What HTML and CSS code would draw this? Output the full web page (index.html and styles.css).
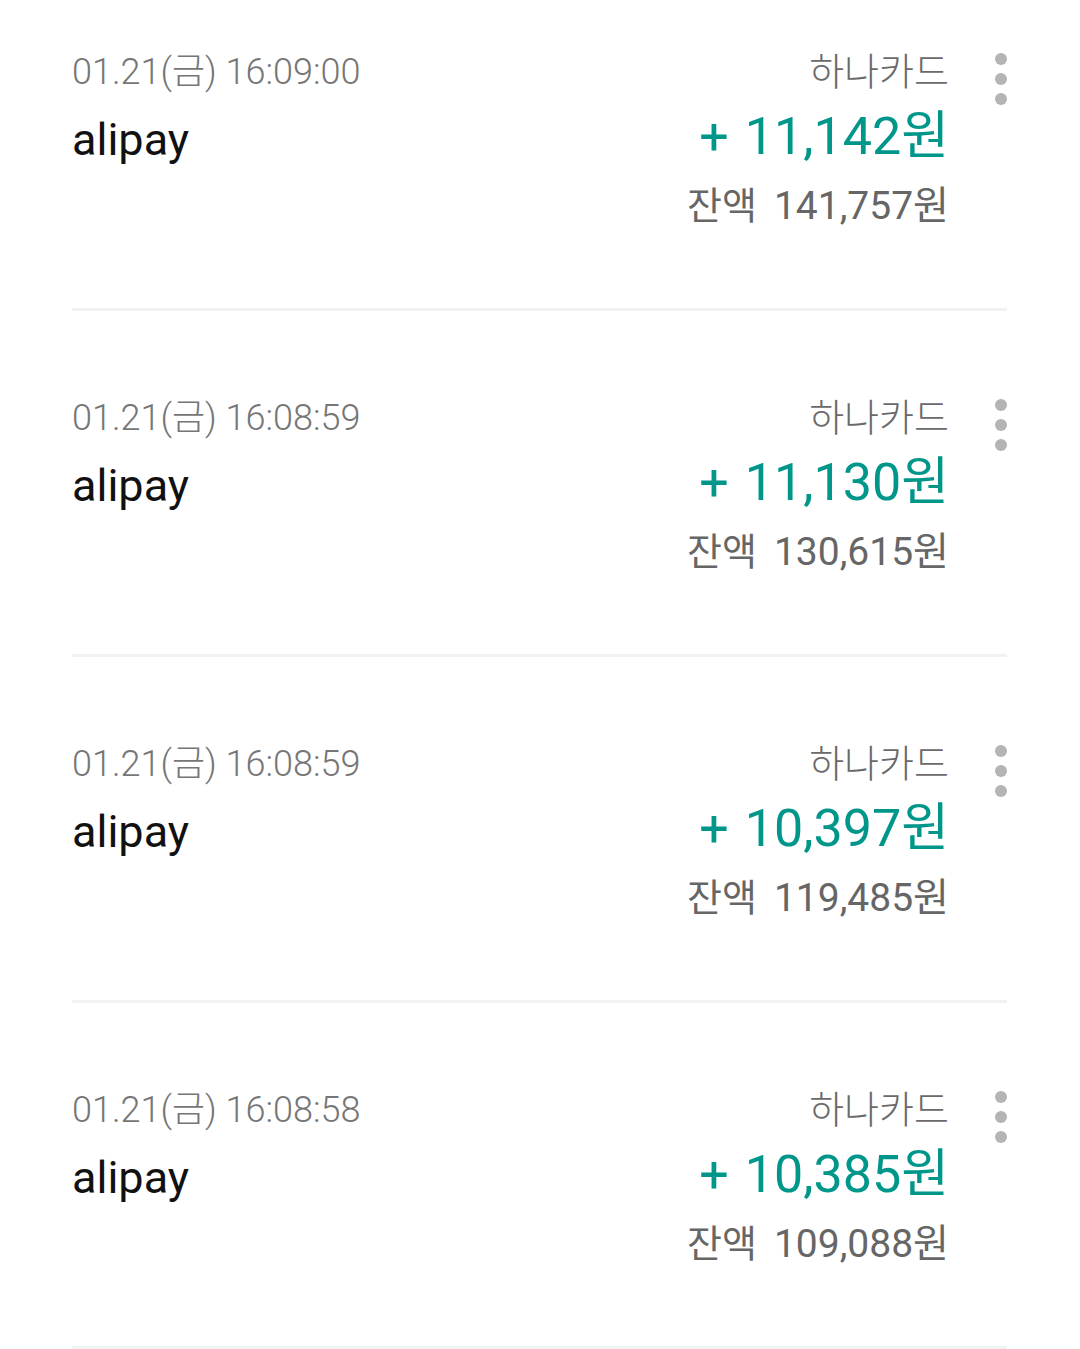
FILE: index.html
```html
<!DOCTYPE html>
<html lang="ko">
<head>
<meta charset="utf-8">
<link rel="stylesheet" href="styles.css">
</head>
<body>
<div class="list">
  <div class="row">
    <div class="left">
      <div class="date">01.21(금) 16:09:00</div>
      <div class="name">alipay</div>
    </div>
    <div class="right">
      <div class="card">하나카드</div>
      <div class="amount"><span class="plus">+</span>11,142원</div>
      <div class="balance"><span class="bl">잔액</span><span class="bv">141,757원</span></div>
    </div>
    <div class="menu"><span class="dot"></span><span class="dot"></span><span class="dot"></span></div>
  </div>
  <div class="row">
    <div class="left">
      <div class="date">01.21(금) 16:08:59</div>
      <div class="name">alipay</div>
    </div>
    <div class="right">
      <div class="card">하나카드</div>
      <div class="amount"><span class="plus">+</span>11,130원</div>
      <div class="balance"><span class="bl">잔액</span><span class="bv">130,615원</span></div>
    </div>
    <div class="menu"><span class="dot"></span><span class="dot"></span><span class="dot"></span></div>
  </div>
  <div class="row">
    <div class="left">
      <div class="date">01.21(금) 16:08:59</div>
      <div class="name">alipay</div>
    </div>
    <div class="right">
      <div class="card">하나카드</div>
      <div class="amount"><span class="plus">+</span>10,397원</div>
      <div class="balance"><span class="bl">잔액</span><span class="bv">119,485원</span></div>
    </div>
    <div class="menu"><span class="dot"></span><span class="dot"></span><span class="dot"></span></div>
  </div>
  <div class="row">
    <div class="left">
      <div class="date">01.21(금) 16:08:58</div>
      <div class="name">alipay</div>
    </div>
    <div class="right">
      <div class="card">하나카드</div>
      <div class="amount"><span class="plus">+</span>10,385원</div>
      <div class="balance"><span class="bl">잔액</span><span class="bv">109,088원</span></div>
    </div>
    <div class="menu"><span class="dot"></span><span class="dot"></span><span class="dot"></span></div>
  </div>
</div>
</body>
</html>
```

FILE: styles.css
```css
html, body {
  margin: 0;
  padding: 0;
  background: #ffffff;
}
body {
  font-family: Roboto, "Noto Sans CJK KR", sans-serif;
  overflow: hidden;
  height: 1349px;
}
.list {
  margin-top: -35px;
}
.row {
  display: flex;
  height: 346px;
  box-sizing: border-box;
  margin: 0 73px 0 72px;
  padding-top: 82px;
  border-bottom: 3px solid #f2f2f2;
}
.left {
  flex: 1;
  display: flex;
  flex-direction: column;
}
.date {
  font-size: 36px;
  font-weight: 300;
  line-height: 50px;
  height: 50px;
  color: #767676;
  white-space: nowrap;
}
.name {
  margin-top: 15px;
  font-size: 45px;
  line-height: 56px;
  height: 56px;
  color: #111111;
}
.right {
  display: flex;
  flex-direction: column;
  align-items: flex-end;
}
.card {
  font-size: 38px;
  font-weight: 300;
  line-height: 50px;
  height: 50px;
  color: #6a6a6a;
}
.amount {
  margin-top: 9px;
  font-size: 52px;
  line-height: 62px;
  height: 62px;
  color: #00968a;
  white-space: nowrap;
}
.plus {
  margin-right: 16px;
}
.balance {
  margin-top: 13px;
  font-size: 38px;
  line-height: 50px;
  height: 50px;
  color: #666666;
  display: flex;
  align-items: baseline;
  gap: 17px;
  white-space: nowrap;
}
.bv {
  font-size: 39px;
}
.menu {
  width: 58px;
  display: flex;
  flex-direction: column;
  align-items: flex-end;
  gap: 8px;
  padding-top: 6px;
}
.dot {
  width: 12px;
  height: 12px;
  border-radius: 50%;
  background: #b4b4b4;
}
```
